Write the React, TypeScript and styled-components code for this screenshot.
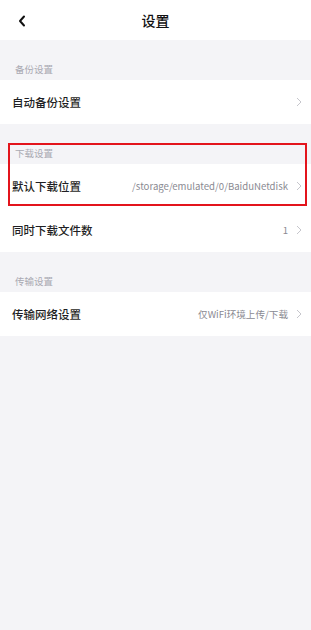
import styled, { createGlobalStyle } from 'styled-components';

type RowItem = {
    id: string;
    label: string;
    value?: string;
};

type Section = {
    id: string;
    title: string;
    rows: RowItem[];
    highlight?: boolean;
};

const sections: Section[] = [
    { id: 'backup', title: '备份设置', rows: [{ id: 'auto', label: '自动备份设置' }] },
    {
        id: 'download',
        title: '下载设置',
        highlight: true,
        rows: [
            { id: 'path', label: '默认下载位置', value: '/storage/emulated/0/BaiduNetdisk' },
            { id: 'count', label: '同时下载文件数', value: '1' },
        ],
    },
    {
        id: 'transfer',
        title: '传输设置',
        rows: [{ id: 'net', label: '传输网络设置', value: '仅WiFi环境上传/下载' }],
    },
];

const Chevron = () => (
    <svg width='6' height='10' viewBox='0 0 6 10'>
        <path d='M1 1l4 4-4 4' fill='none' stroke='#c6c6cc' strokeWidth='1' />
    </svg>
);

const BackIcon = () => (
    <svg width='8' height='12' viewBox='0 0 8 12'>
        <path d='M6 1.5L2 6l4 4.5' fill='none' stroke='#111' strokeWidth='2' strokeLinecap='round' strokeLinejoin='round' />
    </svg>
);

export default function App() {
    return (
        <>
            <GlobalStyle />
            <Page>
                <Header>
                    <BackButton>
                        <BackIcon />
                    </BackButton>
                    <Title>设置</Title>
                </Header>

                {sections.map((section) => (
                    <Group key={section.id}>
                        <GroupTitle>{section.title}</GroupTitle>
                        {section.rows.map((row) => (
                            <Row key={row.id}>
                                <Label>{row.label}</Label>
                                <Right>
                                    {row.value && <Value>{row.value}</Value>}
                                    <Chevron />
                                </Right>
                            </Row>
                        ))}
                        {section.highlight && <Mark />}
                    </Group>
                ))}
            </Page>
        </>
    );
}

const GlobalStyle = createGlobalStyle`
    body {
        margin: 0;
        background: #f4f4f7;
        font-family: 'Noto Sans CJK SC', 'Noto Sans', sans-serif;
    }
`;

const Page = styled.div`
    width: 311px;
    min-height: 630px;
    background: #f4f4f7;
`;

const Header = styled.div`
    position: relative;
    height: 40px;
    background: #fff;
    display: flex;
    align-items: center;
    justify-content: center;
`;

const BackButton = styled.div`
    position: absolute;
    left: 18px;
    top: 15px;
    display: flex;
`;

const Title = styled.h1`
    margin: 0;
    font-size: 14px;
    font-weight: 500;
    color: #111;
`;

const Group = styled.div`
    position: relative;
`;

const GroupTitle = styled.div`
    height: 40px;
    box-sizing: border-box;
    padding: 0 0 4px 15px;
    display: flex;
    align-items: flex-end;
    font-size: 9.5px;
    color: #a9a9b2;
`;

const Row = styled.div`
    height: 44px;
    background: #fff;
    display: flex;
    align-items: center;
    justify-content: space-between;
    padding: 0 9px 0 12px;
`;

const Label = styled.span`
    font-size: 11.5px;
    font-weight: 500;
    color: #1f1f24;
`;

const Right = styled.div`
    display: flex;
    align-items: center;
    gap: 8px;
`;

const Value = styled.span`
    font-size: 9.6px;
    color: #8a8a92;
`;

const Mark = styled.div`
    position: absolute;
    left: 8px;
    top: 19px;
    width: 299px;
    height: 63px;
    box-sizing: border-box;
    border: 2px solid #e3141c;
    pointer-events: none;
`;
